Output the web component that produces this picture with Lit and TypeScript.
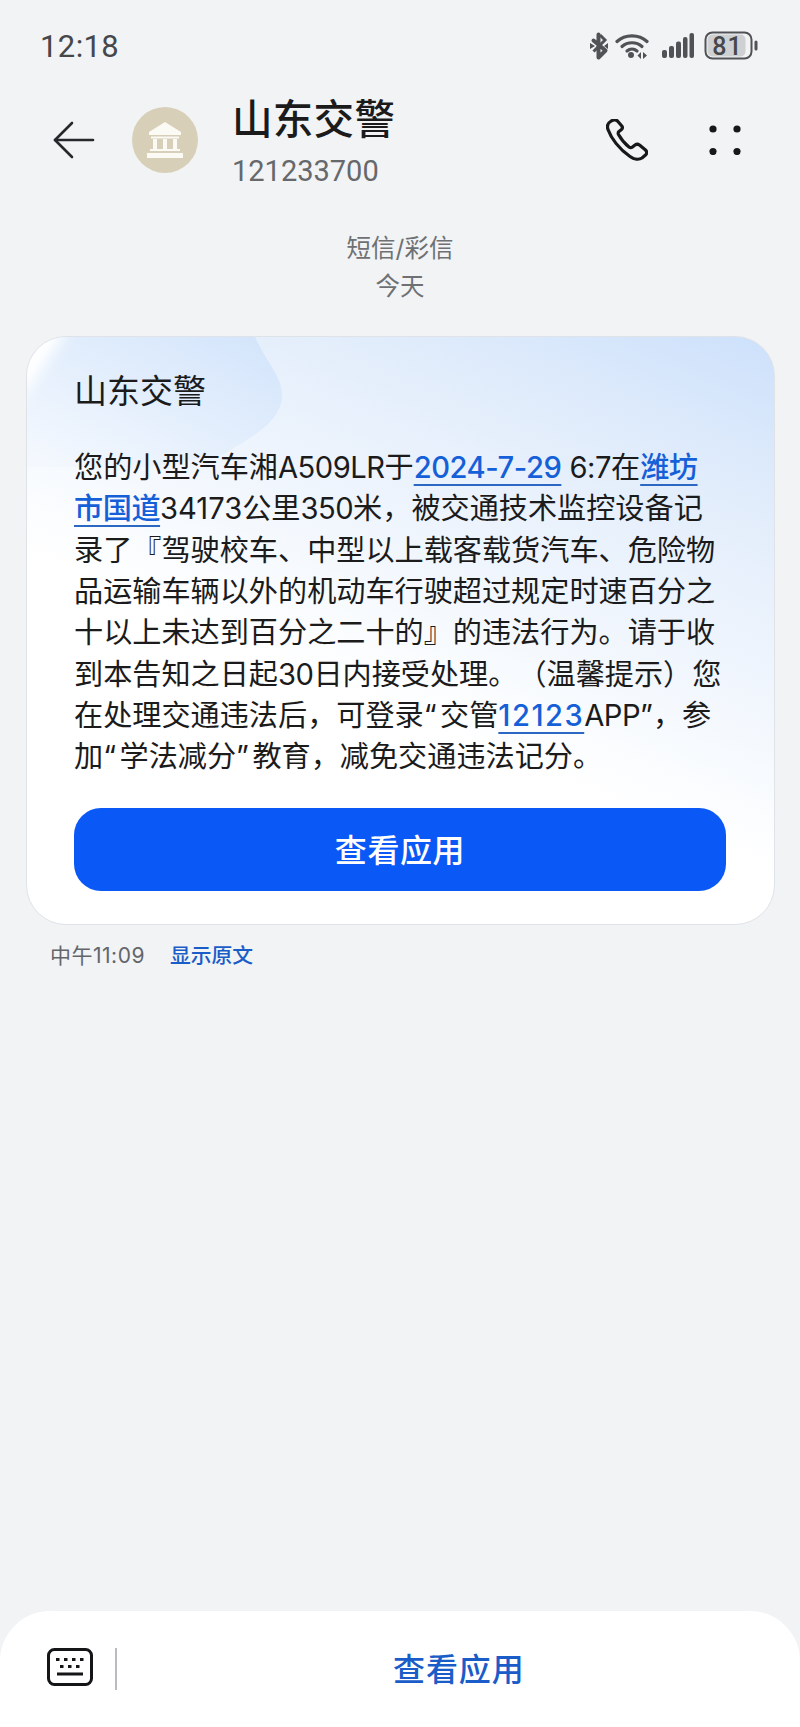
import { LitElement, html, css, svg } from "lit";
import { customElement } from "lit/decorators.js";

const link = (t: string) => html`<span class="link">${t}</span>`;
const latin = (t: string) => html`<span class="lat">${t}</span>`;
const quote = html`<span class="q">“</span>`;

@customElement("app-root")
export class AppRoot extends LitElement {
  static styles = css`
    :host {
      display: flex;
      flex-direction: column;
      width: 800px;
      height: 1727px;
      overflow: hidden;
      background: #f1f3f5;
      font-family: "Inter", "Noto Sans CJK SC", sans-serif;
      color: #1b1b1c;
      text-spacing-trim: space-all;
    }
    .status {
      height: 92px;
      box-sizing: border-box;
      padding: 29px 41px 0 40px;
      display: flex;
      justify-content: space-between;
      align-items: flex-start;
    }
    .time { font-size: 31px; line-height: 36px; color: #45474a; font-family: "Roboto", sans-serif; letter-spacing: 0.4px; }
    .sicons { display: flex; align-items: center; height: 30px; margin-top: 2px; }
    .sicons svg { display: block; }
    .head {
      height: 104px;
      box-sizing: border-box;
      display: flex;
      align-items: center;
      padding-left: 52px;
    }
    .back { width: 44px; height: 40px; margin-top: -8px; flex: none; }
    .avatar {
      width: 66px; height: 66px; margin-left: 36px; margin-top: -8px; flex: none;
      border-radius: 50%; background: #d8cfb8;
      display: flex; align-items: center; justify-content: center;
    }
    .who { margin-left: 34px; display: flex; flex-direction: column; width: 366px; }
    .name { font-size: 40.5px; line-height: 54px; font-weight: 500; letter-spacing: 0.3px; margin-top: -4px; }
    .num { font-size: 29px; line-height: 40px; color: #66686b; font-family: "Roboto", sans-serif; margin-top: 4px; }
    .phone { margin-left: 8px; margin-top: -8px; flex: none; }
    .more { margin-left: 61px; margin-top: -8px; flex: none; }
    .sub { text-align: center; color: #6e7073; font-size: 24.5px; line-height: 38px; margin-top: 33px; }
    .card {
      position: relative;
      margin: 31px 25px 0 26px;
      height: 589px;
      box-sizing: border-box;
      border: 1px solid #dfe3e8;
      border-radius: 40px;
      overflow: hidden;
      background: linear-gradient(203deg, #cde1fb 0%, #e2edfb 20%, #eff5fd 38%, #f8fbfe 50%, #ffffff 60%);
      padding: 31px 48px 0 47px;
    }
    .blob { position: absolute; left: 0; top: 0; }
    .ctitle { position: relative; font-size: 33px; line-height: 46px; }
    .body { position: relative; margin-top: 33px; font-size: 29.15px; line-height: 41.35px; white-space: nowrap; }
    .lat { letter-spacing: -0.5px; }
    .q { margin-right: 3.5px; }
    .link {
      color: #1560d8;
      font-weight: 500;
      letter-spacing: -0.45px;
      text-decoration: underline 2px #2a68c4;
      text-underline-offset: 6px;
      text-decoration-skip-ink: none;
    }
    .link.wide { letter-spacing: 1.5px; }
    .cta {
      position: relative;
      margin-top: 30px;
      height: 83px;
      box-sizing: border-box;
      padding-bottom: 3px;
      border-radius: 27px;
      background: #0a59f7;
      color: #fff;
      font-size: 32px;
      font-weight: 500;
      display: flex; align-items: center; justify-content: center;
      letter-spacing: 0.6px;
    }
    .meta { display: flex; padding: 16px 0 0 50px; font-size: 21px; line-height: 30px; color: #63656a; }
    .meta .stamp { letter-spacing: 0.5px; }
    .meta .show { color: #1a5cc8; margin-left: 25px; font-weight: 500; font-size: 20.8px; }
    .bar {
      margin-top: auto;
      height: 116px;
      background: #fff;
      border-radius: 50px 50px 0 0;
      display: flex;
      align-items: flex-start;
      padding: 37px 0 0 47px;
      box-sizing: border-box;
      position: relative;
    }
    .divider { width: 1.5px; height: 42px; background: #b9bbbe; margin-left: 22px; }
    .barcta { position: absolute; left: 393px; top: 37px; font-size: 32px; line-height: 44px; font-weight: 500; color: #1a5cc8; letter-spacing: 0.9px; }
  `;

  render() {
    return html`
      <div class="status">
        <div class="time">12:18</div>
        <div class="sicons">
          <svg width="20" height="28" viewBox="0 0 20 28" fill="none" stroke="#505256">
            <path d="M9.5 2.5v23l7-7-12-10" stroke-width="4" stroke-linejoin="round" stroke-linecap="round"></path>
            <path d="M4.5 19.5 16 8l-5-5" stroke-width="3"></path>
            <path d="M1 11l5 3-5 3zM19 11l-4 3 4 3z" fill="#505256" stroke="none"></path>
          </svg>
          <svg style="margin-left:6px" width="34" height="28" viewBox="0 0 34 28" fill="none" stroke="#505256" stroke-width="3.2" stroke-linecap="round">
            <path d="M2 9.5C10 2 24 2 32 9.5"></path>
            <path d="M7 14.5C12.5 9.5 21.5 9.5 27 14.5"></path>
            <path d="M12 19c3-2.5 7-2.5 10 0"></path>
            <circle cx="16" cy="23" r="3" fill="#505256" stroke="none"></circle>
            <path d="M26 20l-3.5 3.5 3.5 3.5zM28 20l4 3.500-4 3.500z" fill="#505256" stroke="none"></path>
          </svg>
          <svg style="margin-left:13px" width="33" height="28" viewBox="0 0 33 28" fill="#505256">
            <rect x="0" y="18" width="5" height="8" rx="2"></rect>
            <rect x="7" y="14" width="5" height="12" rx="2"></rect>
            <rect x="14" y="9.500" width="5" height="16.500" rx="2"></rect>
            <rect x="21" y="5" width="4.500" height="21" rx="2"></rect>
            <rect x="27.500" y="1" width="4.500" height="25" rx="2"></rect>
          </svg>
          <svg style="margin-left:9px" width="55" height="30" viewBox="0 0 55 30" fill="none">
            <rect x="1.500" y="1.500" width="46" height="26" rx="7" stroke="#505256" stroke-width="2"></rect>
            <rect x="3.500" y="3.500" width="38" height="22" rx="5" fill="#cfd0d2"></rect>
            <rect x="50.500" y="9.500" width="3" height="10" rx="1.500" fill="#505256"></rect>
            <text x="23.500" y="23.500" text-anchor="middle" font-size="25" font-weight="500" letter-spacing="1" font-family="Roboto, sans-serif" fill="#45474a">81</text>
          </svg>
        </div>
      </div>

      <div class="head">
        <svg class="back" viewBox="0 0 44 40" fill="none" stroke="#26282b" stroke-width="2.600" stroke-linecap="round" stroke-linejoin="round">
          <path d="M3 20H41"></path>
          <path d="M20 3 3 20l17 17"></path>
        </svg>
        <div class="avatar">
          <svg width="36" height="38" viewBox="0 0 36 38" fill="#fbfaf5">
            <path d="M18 1 34 11v3H2v-3z"></path>
            <rect x="4" y="15.500" width="28" height="2"></rect>
            <rect x="6" y="18" width="4" height="10"></rect>
            <rect x="16" y="18" width="4" height="10"></rect>
            <rect x="26" y="18" width="4" height="10"></rect>
            <rect x="3" y="28" width="30" height="2"></rect>
            <rect x="0" y="32" width="36" height="5"></rect>
          </svg>
        </div>
        <div class="who">
          <div class="name">山东交警</div>
          <div class="num">121233700</div>
        </div>
        <svg class="phone" width="42" height="42" viewBox="0 0 42 42" fill="none" stroke="#17181a" stroke-width="3.200" stroke-linejoin="round">
          <path d="M4.500 2.500 C2 4 .8 7 2 10.500 C5 19 13 30 24 37.500 C28 40.500 33 41 36 39 L39.500 36 C41 34.500 41 32.500 39.500 31 L33.500 26 C32 25 30.500 25 29 26 L26.500 28 C25.500 28.800 24 28.800 23 28 C18.500 24.500 15 20 12.500 15.500 C12 14.500 12 13.500 13 12.500 L15.500 10.500 C16.500 9.500 16.500 8 15.800 7 L11.500 2 C10 .5 7.500 .5 4.500 2.500 Z"></path>
        </svg>
        <svg class="more" width="32" height="30" viewBox="0 0 32 30" fill="#17181a">
          <circle cx="4" cy="4" r="3.600"></circle>
          <circle cx="28" cy="4" r="3.600"></circle>
          <circle cx="4" cy="26.500" r="3.600"></circle>
          <circle cx="28" cy="26.500" r="3.600"></circle>
        </svg>
      </div>

      <div class="sub">短信/彩信<br />今天</div>

      <div class="card">
        <svg class="blob" width="260" height="130" viewBox="0 0 260 130">
          ${svg`<defs>
            <linearGradient id="b" x1="1" y1="0" x2="0" y2="1">
              <stop offset="0" stop-color="#d2e4fb"></stop>
              <stop offset="1" stop-color="#f5f9fe"></stop>
            </linearGradient>
            <filter id="soft" x="-30%" y="-30%" width="160%" height="160%">
              <feGaussianBlur stdDeviation="7"></feGaussianBlur>
            </filter>
          </defs>
          <path d="M0 0H228C240 26 255 40 255 58C255 85 225 100 195 118L120 130H0Z" fill="url(#b)"></path>
          <path d="M-10 -10H42L-10 70Z" fill="#ffffff" filter="url(#soft)"></path>`}
        </svg>
        <div class="ctitle">山东交警</div>
        <div class="body">
          <div>您的小型汽车湘${latin("A509LR")}于${link("2024-7-29")} ${latin("6:7")}在${link("潍坊")}</div>
          <div>${link("市国道")}34173公里${latin("350")}米，被交通技术监控设备记</div>
          <div>录了『驾驶校车、中型以上载客载货汽车、危险物</div>
          <div>品运输车辆以外的机动车行驶超过规定时速百分之</div>
          <div>十以上未达到百分之二十的』的违法行为。请于收</div>
          <div>到本告知之日起${latin("30")}日内接受处理。（温馨提示）您</div>
          <div>在处理交通违法后，可登录${quote}交管<span class="link wide">12123</span>${latin("APP")}”，参</div>
          <div>加${quote}学法减分”<span class="q"></span>教育，减免交通违法记分。</div>
        </div>
        <div class="cta">查看应用</div>
      </div>

      <div class="meta"><span class="stamp">中午11:09</span><span class="show">显示原文</span></div>

      <div class="bar">
        <svg width="46" height="38" viewBox="0 0 46 38" fill="none">
          <rect x="1.500" y="1.500" width="43" height="35" rx="6" stroke="#141517" stroke-width="3"></rect>
          <g fill="#141517">
            <rect x="9" y="10" width="3.500" height="3"></rect>
            <rect x="17" y="10" width="3.500" height="3"></rect>
            <rect x="25" y="10" width="3.500" height="3"></rect>
            <rect x="33" y="10" width="3.500" height="3"></rect>
            <rect x="13" y="17" width="3.500" height="3"></rect>
            <rect x="21" y="17" width="3.500" height="3"></rect>
            <rect x="29" y="17" width="3.500" height="3"></rect>
            <rect x="10" y="24.500" width="26" height="3"></rect>
          </g>
        </svg>
        <div class="divider"></div>
        <div class="barcta">查看应用</div>
      </div>
    `;
  }
}
